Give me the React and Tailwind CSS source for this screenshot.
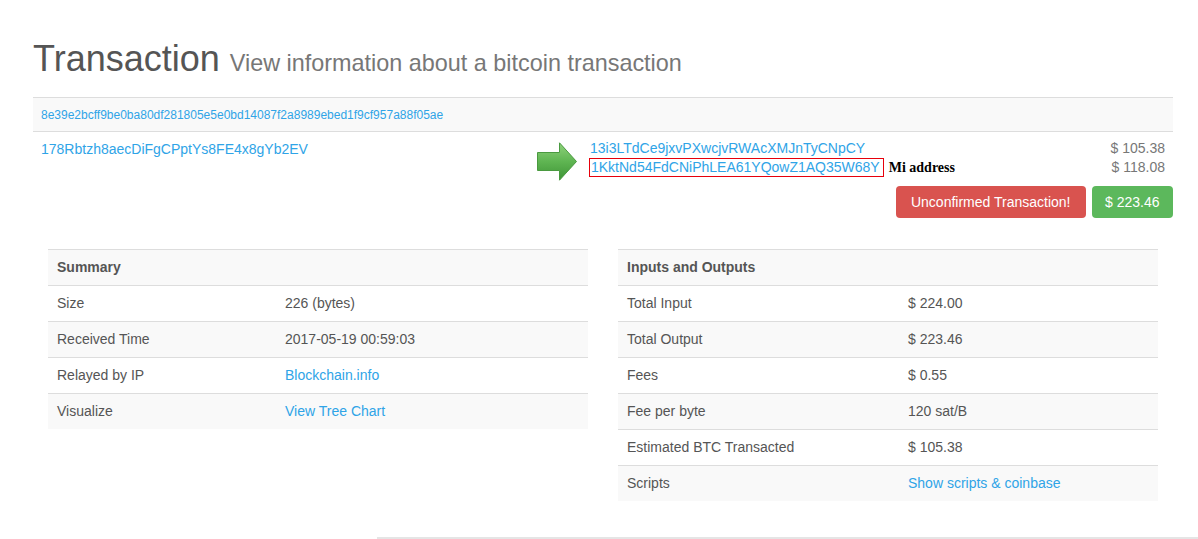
import React from "react";

const link = "text-[#2fa4e7]";

const summaryRows = [
  { label: "Size", value: "226 (bytes)" },
  { label: "Received Time", value: "2017-05-19 00:59:03" },
  { label: "Relayed by IP", value: "Blockchain.info", link: true },
  { label: "Visualize", value: "View Tree Chart", link: true },
];

const ioRows = [
  { label: "Total Input", value: "$ 224.00" },
  { label: "Total Output", value: "$ 223.46" },
  { label: "Fees", value: "$ 0.55" },
  { label: "Fee per byte", value: "120 sat/B" },
  { label: "Estimated BTC Transacted", value: "$ 105.38" },
  { label: "Scripts", value: "Show scripts & coinbase", link: true },
];

const Arrow = () => (
  <svg width="40" height="39" viewBox="0 0 40 39" className="block">
    <defs>
      <linearGradient id="arrowFill" x1="0" y1="0" x2="0" y2="1">
        <stop offset="0" stopColor="#8fd27c" />
        <stop offset="0.5" stopColor="#5fb552" />
        <stop offset="1" stopColor="#3e9436" />
      </linearGradient>
    </defs>
    <path
      d="M0.5 10.5 H22.5 V0.8 L39.5 19.5 L22.5 38.2 V28.5 H0.5 Z"
      fill="url(#arrowFill)"
      stroke="#4a9a40"
      strokeWidth="1"
    />
  </svg>
);

const InfoTable = ({ title, rows, labelWidth }) => (
  <div className="w-[540px]">
    <div className="flex h-[36px] items-center border-t border-[#dddddd] bg-[#f9f9f9] px-[9px] font-bold text-[#555]">
      {title}
    </div>
    {rows.map((row, i) => (
      <div
        key={row.label}
        className={
          "flex h-[36px] items-center border-t border-[#dddddd] px-[9px] " +
          (i % 2 === 1 ? "bg-[#f9f9f9]" : "bg-white")
        }
      >
        <div className="shrink-0 text-[#555]" style={{ width: labelWidth }}>
          {row.label}
        </div>
        <div className={row.link ? link : "text-[#555]"}>{row.value}</div>
      </div>
    ))}
  </div>
);

export default function App() {
  return (
    <div className="relative min-h-[539px] bg-white text-[14px] font-['Liberation_Sans',Arial,sans-serif]">
      <div className="ml-[33px] w-[1140px] pt-[39px]">
        <h1 className="mb-[18px] h-[40px] text-[36px] leading-[40px] text-[#555]">
          Transaction
          <span className="ml-[10px] text-[23.4px] text-[#777]">View information about a bitcoin transaction</span>
        </h1>

        <div className="flex h-[35px] items-center border-y border-[#dddddd] bg-[#f9f9f9] pl-[8px] text-[12px]">
          <span className={link}>8e39e2bcff9be0ba80df281805e5e0bd14087f2a8989ebed1f9cf957a88f05ae</span>
        </div>

        <div className="flex px-[8px] pt-[7px]">
          <div className="w-[496px] shrink-0 leading-[20px]">
            <span className={link}>178Rbtzh8aecDiFgCPptYs8FE4x8gYb2EV</span>
          </div>
          <div className="w-[53px] shrink-0 pt-[3px]">
            <Arrow />
          </div>
          <div className="flex-1">
            <div className="flex h-[19px] items-center justify-between">
              <span className={link}>13i3LTdCe9jxvPXwcjvRWAcXMJnTyCNpCY</span>
              <span className="text-[#777]">$ 105.38</span>
            </div>
            <div className="flex h-[19px] items-center justify-between">
              <div className="flex items-center">
                <span className="-ml-px flex h-[19px] items-center border border-solid border-red-600 pl-px pr-[3px] text-[#2fa4e7]">
                  1KktNd54FdCNiPhLEA61YQowZ1AQ35W68Y
                </span>
                <span className="ml-[5px] font-['Liberation_Serif',serif] text-[14px] font-bold text-black">
                  Mi address
                </span>
              </div>
              <span className="text-[#777]">$ 118.08</span>
            </div>
          </div>
        </div>

        <div className="mt-[5px] flex justify-end gap-[6px]">
          <div className="flex h-[32px] items-center rounded-[4px] bg-[#d9534f] px-[15px] text-white">
            Unconfirmed Transaction!
          </div>
          <div className="flex h-[32px] items-center rounded-[4px] bg-[#5cb85c] px-[13.5px] text-white">
            $ 223.46
          </div>
        </div>

        <div className="mt-[31px] flex gap-[30px] px-[15px]">
          <InfoTable title="Summary" rows={summaryRows} labelWidth={228} />
          <InfoTable title="Inputs and Outputs" rows={ioRows} labelWidth={281} />
        </div>
      </div>
      <div className="absolute bottom-0 left-[377px] right-0 border-t-2 border-[#e5e5e5]" />
    </div>
  );
}
